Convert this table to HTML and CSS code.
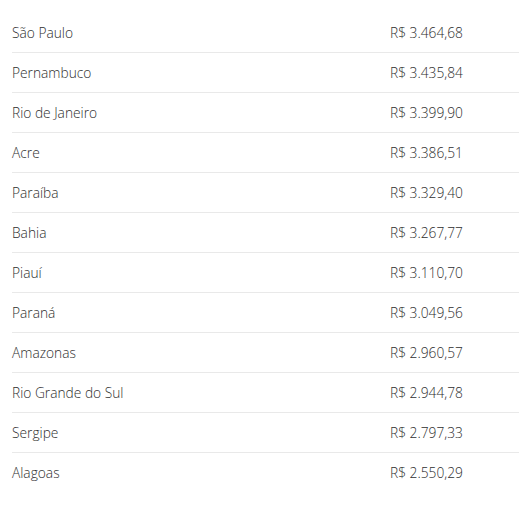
FILE: index.html
```html
<!DOCTYPE html>
<html lang="pt-BR">
<head>
<meta charset="utf-8">
<link rel="stylesheet" href="styles.css">
</head>
<body>
<div class="list">
  <div class="row"><span class="name">São Paulo</span><span class="value">R$ 3.464,68</span></div>
  <div class="row"><span class="name">Pernambuco</span><span class="value">R$ 3.435,84</span></div>
  <div class="row"><span class="name">Rio de Janeiro</span><span class="value">R$ 3.399,90</span></div>
  <div class="row"><span class="name">Acre</span><span class="value">R$ 3.386,51</span></div>
  <div class="row"><span class="name">Paraíba</span><span class="value">R$ 3.329,40</span></div>
  <div class="row"><span class="name">Bahia</span><span class="value">R$ 3.267,77</span></div>
  <div class="row"><span class="name">Piauí</span><span class="value">R$ 3.110,70</span></div>
  <div class="row"><span class="name">Paraná</span><span class="value">R$ 3.049,56</span></div>
  <div class="row"><span class="name">Amazonas</span><span class="value">R$ 2.960,57</span></div>
  <div class="row"><span class="name">Rio Grande do Sul</span><span class="value">R$ 2.944,78</span></div>
  <div class="row"><span class="name">Sergipe</span><span class="value">R$ 2.797,33</span></div>
  <div class="row"><span class="name">Alagoas</span><span class="value">R$ 2.550,29</span></div>
</div>
</body>
</html>
```
FILE: styles.css
```css
html, body {
  margin: 0;
  padding: 0;
  background: #ffffff;
}
body {
  font-family: "Open Sans", "DejaVu Sans", sans-serif;
  font-size: 13.75px;
  font-weight: 300;
  color: #2e2e2e;
}
.list {
  padding: 13px 0 0 12px;
}
.row {
  display: grid;
  grid-template-columns: 378px 1fr;
  align-items: center;
  height: 39px;
  border-bottom: 1px solid #e9e9e9;
}
.row:last-child {
  border-bottom: none;
}
.name, .value {
  line-height: 20px;
}
```
